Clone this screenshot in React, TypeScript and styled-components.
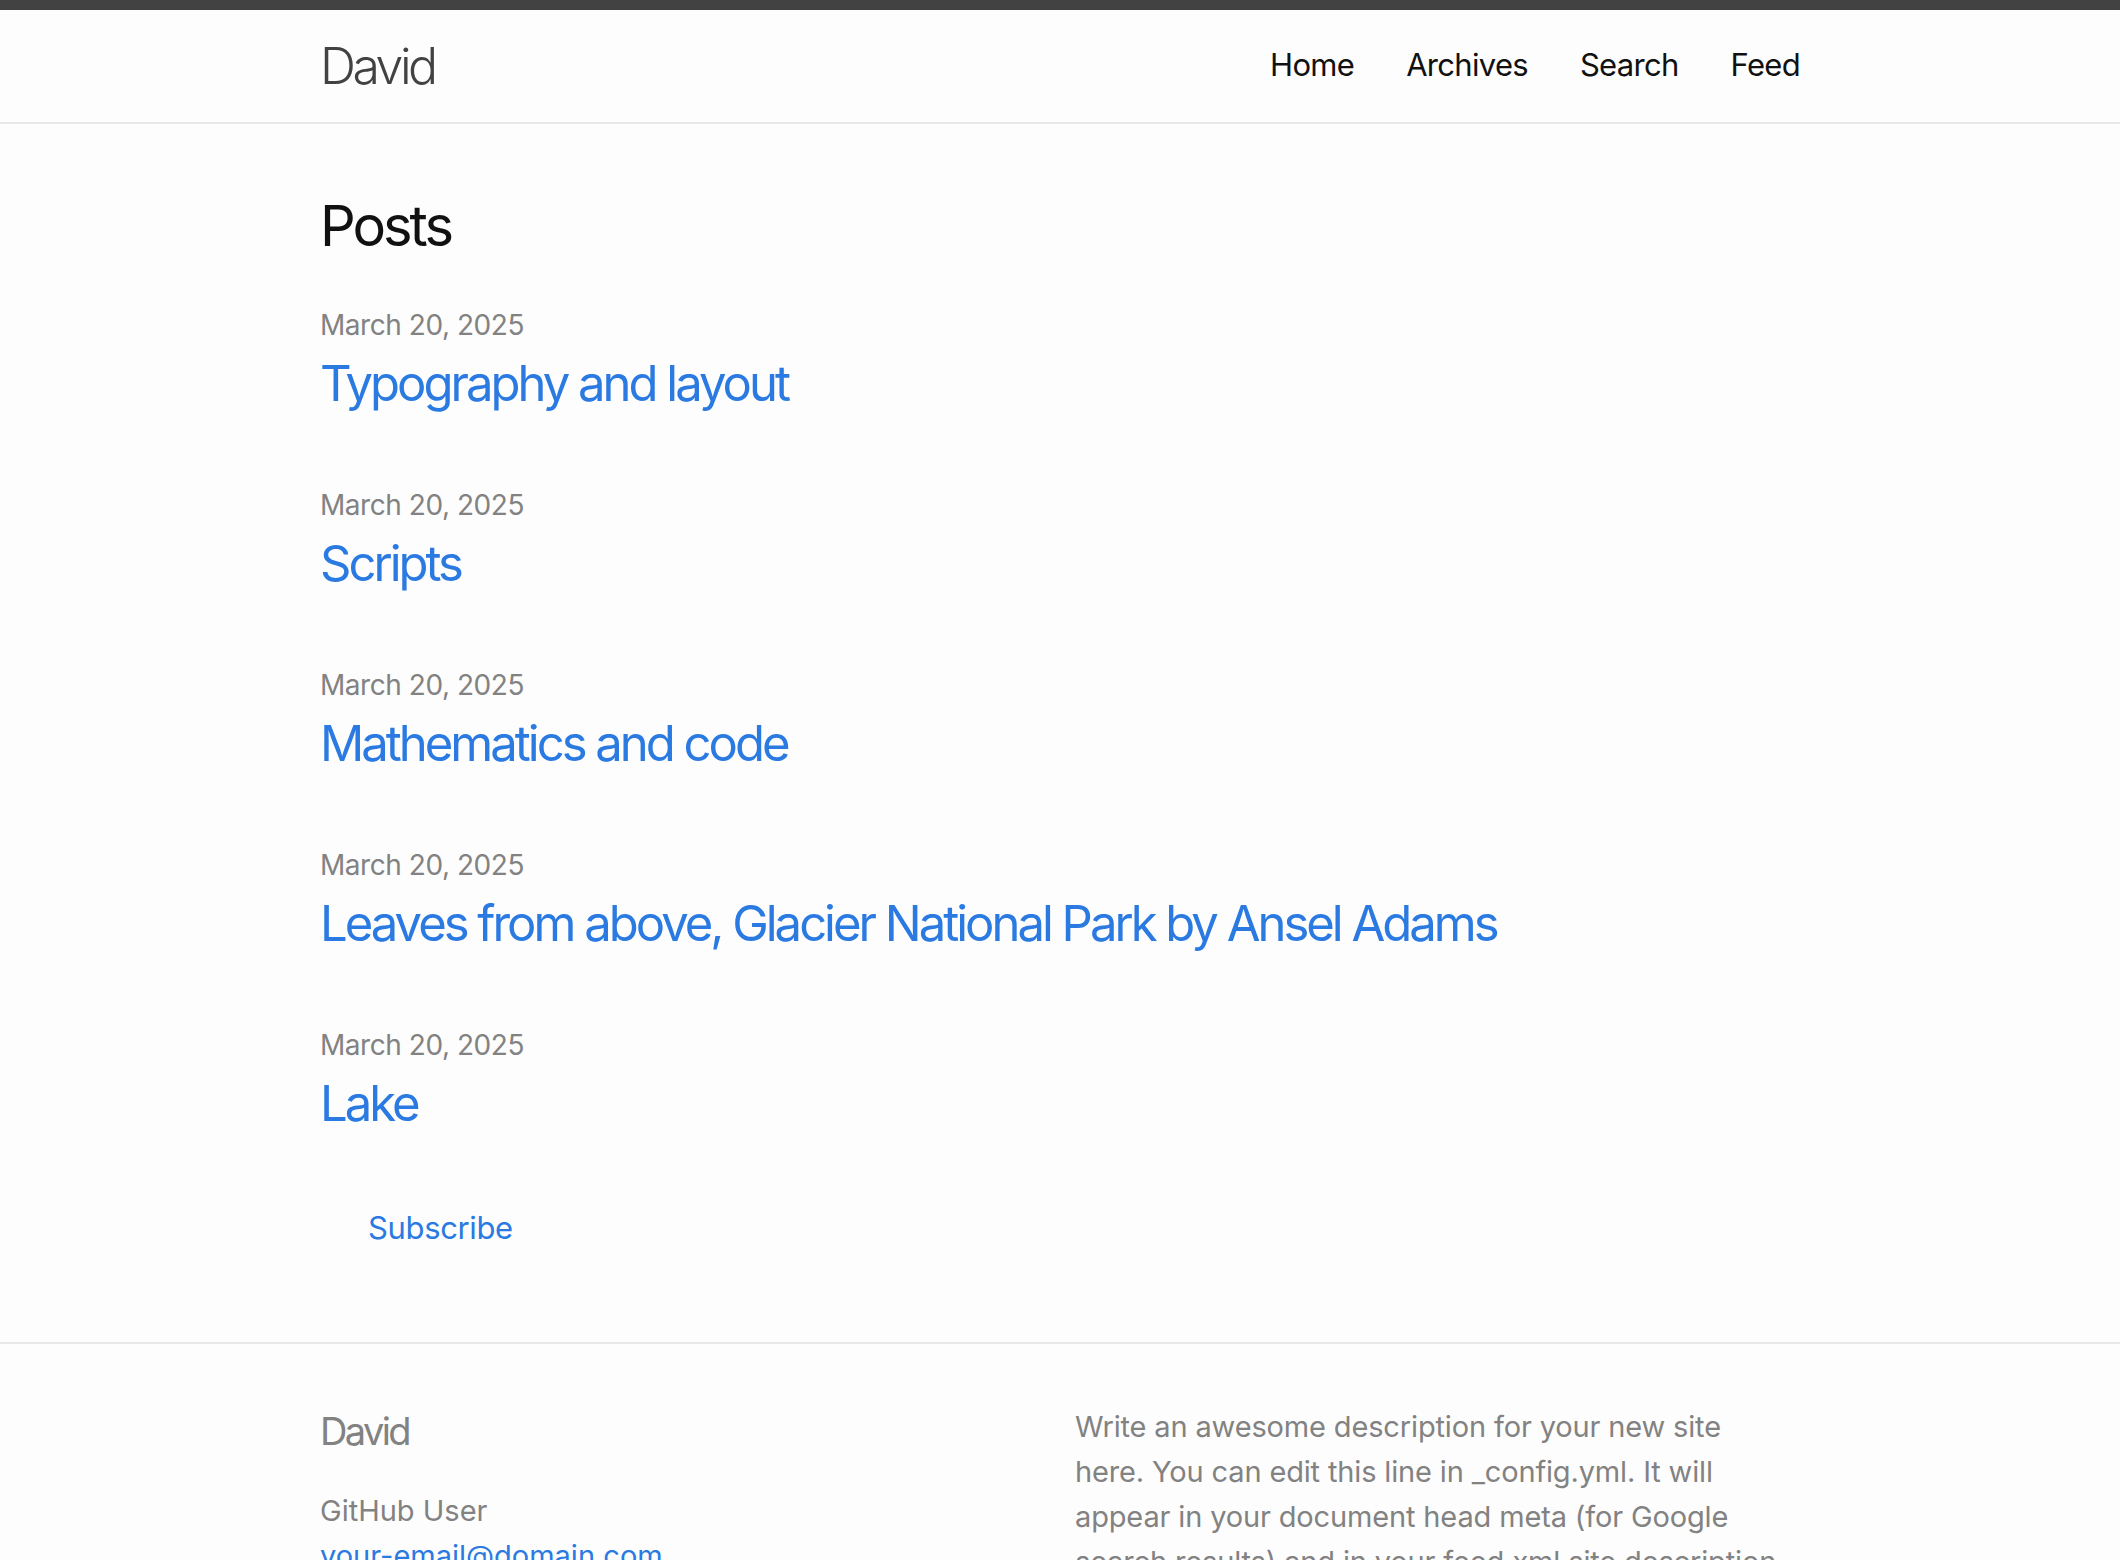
import React from "react";
import styled, { createGlobalStyle } from "styled-components";

const GlobalStyle = createGlobalStyle`
  html, body {
    margin: 0;
    padding: 0;
    background: #fdfdfd;
  }
  body {
    font-family: Inter, "Noto Sans", "Liberation Sans", sans-serif;
    color: #111111;
    font-weight: 400;
    -webkit-font-smoothing: antialiased;
  }
  a {
    text-decoration: none;
  }
`;

const SiteHeader = styled.header`
  border-top: 10px solid #424242;
  border-bottom: 2px solid #e8e8e8;
  min-height: 112px;
`;

const Wrapper = styled.div`
  width: 1480px;
  margin: 0 auto;
`;

const HeaderBar = styled(Wrapper)`
  display: flex;
  justify-content: space-between;
  align-items: flex-start;
  height: 112px;
`;

const SiteTitle = styled.a`
  font-size: 50px;
  font-weight: 300;
  letter-spacing: -3.5px;
  line-height: 112px;
  color: #424242;
`;

const Nav = styled.nav`
  display: flex;
  gap: 52px;
`;

const NavLink = styled.a`
  font-size: 31px;
  letter-spacing: -0.7px;
  line-height: 110px;
  color: #111111;
`;

const Main = styled.main`
  padding: 60px 0;
`;

const PageHeading = styled.h1`
  margin: 0 0 36px;
  font-size: 56px;
  font-weight: 400;
  letter-spacing: -3px;
  line-height: 84px;
  color: #111111;
`;

const PostList = styled.ul`
  list-style: none;
  margin: 0;
  padding: 0;
`;

const PostItem = styled.li`
  margin-bottom: 62px;
`;

const PostMeta = styled.span`
  display: block;
  font-size: 28px;
  letter-spacing: -0.45px;
  line-height: 42px;
  color: #828282;
`;

const PostTitle = styled.h3`
  margin: 0;
  font-size: 49px;
  font-weight: 400;
  letter-spacing: -3px;
  line-height: 76px;
`;

const BlueLink = styled.a`
  color: #2a7ae2;
`;

const Subscribe = styled.p`
  margin: 0 0 30px;
  padding-left: 48px;
  font-size: 31px;
  letter-spacing: -0.35px;
  line-height: 48px;
`;

const SiteFooter = styled.footer`
  border-top: 2px solid #e8e8e8;
  padding: 60px 0;
`;

const FooterGrid = styled(Wrapper)`
  display: grid;
  grid-template-columns: 1fr 1fr;
`;

const FooterCol = styled.div`
  min-width: 0;
`;

const FooterHeading = styled.h2`
  margin: 0 0 30px;
  font-size: 38px;
  font-weight: 400;
  letter-spacing: -2.6px;
  line-height: 54px;
  color: #828282;
`;

const ContactList = styled.ul`
  list-style: none;
  margin: 0;
  padding: 0;
  font-size: 29px;
  line-height: 45px;
  color: #828282;
`;

const Description = styled.p`
  margin: 0;
  padding: 0 15px;
  font-size: 29px;
  letter-spacing: -0.15px;
  line-height: 45px;
  color: #828282;
`;

const posts = [
  "Typography and layout",
  "Scripts",
  "Mathematics and code",
  "Leaves from above, Glacier National Park by Ansel Adams",
  "Lake",
];

export default function App() {
  return (
    <>
      <GlobalStyle />
      <SiteHeader>
        <HeaderBar>
          <SiteTitle href="#">David</SiteTitle>
          <Nav>
            <NavLink href="#">Home</NavLink>
            <NavLink href="#">Archives</NavLink>
            <NavLink href="#">Search</NavLink>
            <NavLink href="#">Feed</NavLink>
          </Nav>
        </HeaderBar>
      </SiteHeader>
      <Main>
        <Wrapper>
          <PageHeading>Posts</PageHeading>
          <PostList>
            {posts.map((p) => (
              <PostItem key={p}>
                <PostMeta>March 20, 2025</PostMeta>
                <PostTitle>
                  <BlueLink href="#">{p}</BlueLink>
                </PostTitle>
              </PostItem>
            ))}
          </PostList>
          <Subscribe>
            <BlueLink href="#">Subscribe</BlueLink>
          </Subscribe>
        </Wrapper>
      </Main>
      <SiteFooter>
        <FooterGrid>
          <FooterCol>
            <FooterHeading>David</FooterHeading>
            <ContactList>
              <li>GitHub User</li>
              <li>
                <BlueLink href="#">your-email@domain.com</BlueLink>
              </li>
            </ContactList>
          </FooterCol>
          <FooterCol>
            <Description>
              Write an awesome description for your new site here. You can edit this line in _config.yml. It will
              appear in your document head meta (for Google search results) and in your feed.xml site description.
            </Description>
          </FooterCol>
        </FooterGrid>
      </SiteFooter>
    </>
  );
}
